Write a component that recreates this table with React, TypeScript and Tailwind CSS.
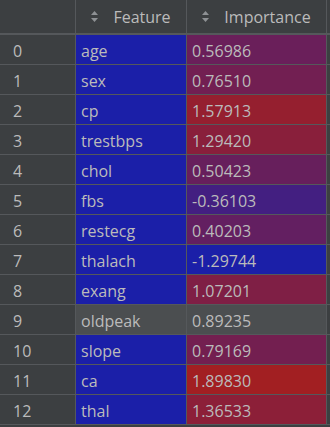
import React from 'react';

interface Row {
  feature: string;
  importance: string;
  featureBg: string;
  importanceBg: string;
}

const rows: Row[] = [
  { feature: 'age', importance: '0.56986', featureBg: 'bg-[#1b1fa8]', importanceBg: 'bg-[#6a1f5a]' },
  { feature: 'sex', importance: '0.76510', featureBg: 'bg-[#1b1fa8]', importanceBg: 'bg-[#721f52]' },
  { feature: 'cp', importance: '1.57913', featureBg: 'bg-[#1b1fa8]', importanceBg: 'bg-[#951f2f]' },
  { feature: 'trestbps', importance: '1.29420', featureBg: 'bg-[#1b1fa8]', importanceBg: 'bg-[#891f3b]' },
  { feature: 'chol', importance: '0.50423', featureBg: 'bg-[#1b1fa8]', importanceBg: 'bg-[#671f5c]' },
  { feature: 'fbs', importance: '-0.36103', featureBg: 'bg-[#1b1fa8]', importanceBg: 'bg-[#431f81]' },
  { feature: 'restecg', importance: '0.40203', featureBg: 'bg-[#1b1fa8]', importanceBg: 'bg-[#631f61]' },
  { feature: 'thalach', importance: '-1.29744', featureBg: 'bg-[#1b1fa8]', importanceBg: 'bg-[#1b1fa8]' },
  { feature: 'exang', importance: '1.07201', featureBg: 'bg-[#1b1fa8]', importanceBg: 'bg-[#7f1f45]' },
  { feature: 'oldpeak', importance: '0.89235', featureBg: 'bg-[#4b4e50]', importanceBg: 'bg-[#4b4e50]' },
  { feature: 'slope', importance: '0.79169', featureBg: 'bg-[#1b1fa8]', importanceBg: 'bg-[#731f50]' },
  { feature: 'ca', importance: '1.89830', featureBg: 'bg-[#1b1fa8]', importanceBg: 'bg-[#a21f22]' },
  { feature: 'thal', importance: '1.36533', featureBg: 'bg-[#1b1fa8]', importanceBg: 'bg-[#8c1f38]' },
];

function SortIcon() {
  return (
    <svg width="7" height="11" viewBox="0 0 7 11" className="shrink-0">
      <path d="M3.5 0 L7 4 L0 4 Z" fill="#8e9194" />
      <path d="M0 7 L7 7 L3.5 11 Z" fill="#8e9194" />
    </svg>
  );
}

export default function App() {
  return (
    <div className="w-[330px] h-[427px] bg-[#3c3f41] text-[#bbbbbb] text-[16px] overflow-hidden font-['Open_Sans',sans-serif]">
      {/* header */}
      <div className="flex h-[35px] border-b-2 border-[#55585b]">
        <div className="w-[76px] border-r border-[#55585b]" />
        <div className="w-[111px] border-r border-[#55585b] flex items-center justify-center gap-[15px]">
          <SortIcon />
          <span>Feature</span>
        </div>
        <div className="w-[140px] border-r border-[#55585b] flex items-center justify-center gap-[15px]">
          <SortIcon />
          <span>Importance</span>
        </div>
      </div>

      {/* body */}
      {rows.map((r, i) => (
        <div key={i} className="flex h-[30px] border-b border-[#55585b]">
          <div className="w-[76px] border-r border-[#55585b] pl-[13px] pt-[2px] flex items-center">{i}</div>
          <div className={`w-[111px] border-r border-[#55585b] pl-[5px] pt-[2px] flex items-center ${r.featureBg}`}>
            {r.feature}
          </div>
          <div className={`w-[140px] border-r border-[#55585b] pl-[5px] pt-[2px] flex items-center ${r.importanceBg}`}>
            {r.importance}
          </div>
        </div>
      ))}
    </div>
  );
}
